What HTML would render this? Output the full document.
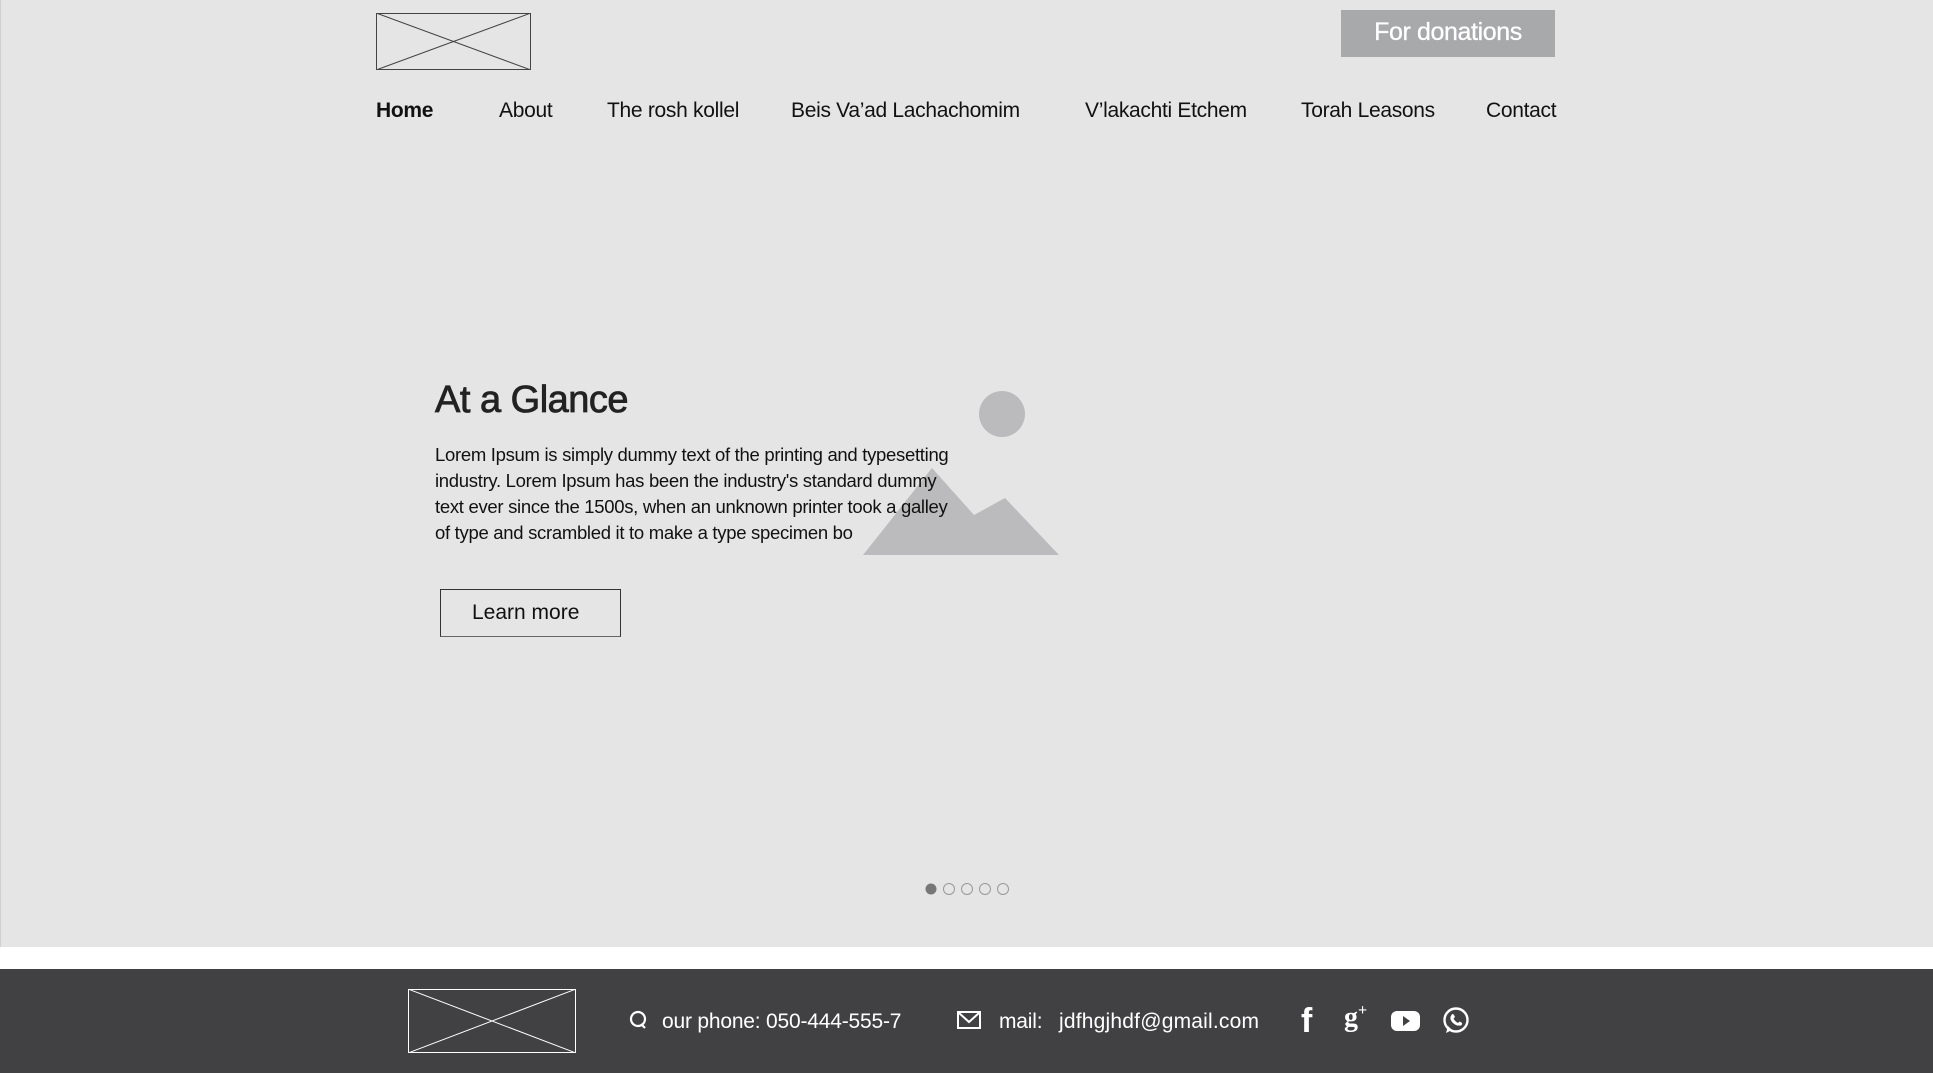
<!DOCTYPE html>
<html><head><meta charset="utf-8"><style>
*{margin:0;padding:0;box-sizing:border-box}
body{width:1933px;height:1073px;overflow:hidden;background:#fff;font-family:"Liberation Sans",Arial,sans-serif;position:relative}
.a{position:absolute;white-space:nowrap}
#hero{position:absolute;left:0;top:0;width:1933px;height:947px;background:#e5e5e5;border-left:1px solid #cfcfcf}
#foot{position:absolute;left:0;top:969px;width:1933px;height:104px;background:#414143}
.nav{top:99px;font-size:21px;color:#111;letter-spacing:-0.3px}
.ft{color:#fff;font-size:21px;top:1010px;letter-spacing:-0.2px}
</style></head><body>
<div id="hero"></div>
<svg class="a" style="left:376px;top:13px" width="155" height="57"><rect x="0.5" y="0.5" width="154" height="56" fill="none" stroke="#444"/><line x1="0" y1="0" x2="155" y2="57" stroke="#444"/><line x1="155" y1="0" x2="0" y2="57" stroke="#444"/></svg>
<div class="a" style="left:1341px;top:10px;width:214px;height:47px;background:#a8a9ab;color:#fff;font-size:25px;line-height:45px;text-align:center;letter-spacing:-0.4px;-webkit-text-stroke:0.3px #fff">For donations</div>
<div class="a nav" style="left:376px;font-weight:bold">Home</div>
<div class="a nav" style="left:499px">About</div>
<div class="a nav" style="left:607px">The rosh kollel</div>
<div class="a nav" style="left:791px">Beis Va’ad Lachachomim</div>
<div class="a nav" style="left:1085px">V’lakachti Etchem</div>
<div class="a nav" style="left:1301px">Torah Leasons</div>
<div class="a nav" style="left:1486px">Contact</div>
<svg class="a" style="left:0;top:0" width="1933" height="947"><circle cx="1002" cy="414" r="23" fill="#bbbbbd"/><polygon points="863,555 932,468 974,515 1005,498 1059,555" fill="#bbbbbd"/></svg>
<div class="a" style="left:435px;top:379px;font-size:38px;color:#222;letter-spacing:-0.5px;-webkit-text-stroke:0.8px #222">At a Glance</div>
<div class="a" style="left:435px;top:442px;font-size:18.5px;line-height:26px;color:#111;white-space:normal;width:525px;letter-spacing:-0.3px">Lorem Ipsum is simply dummy text of the printing and typesetting industry. Lorem Ipsum has been the industry's standard dummy text ever since the 1500s, when an unknown printer took a galley of type and scrambled it to make a type specimen bo</div>
<div class="a" style="left:440px;top:589px;width:181px;height:48px;border:1px solid #333;border-bottom-color:#666;font-size:21px;line-height:46px;padding-left:31px;color:#111">Learn more</div>
<svg class="a" style="left:920px;top:880px" width="100" height="20"><circle cx="11" cy="9" r="5.5" fill="#777"/><g fill="none" stroke="#999"><circle cx="29" cy="9" r="5.5"/><circle cx="47" cy="9" r="5.5"/><circle cx="65" cy="9" r="5.5"/><circle cx="83" cy="9" r="5.5"/></g></svg>
<div id="foot"></div>
<svg class="a" style="left:408px;top:989px" width="168" height="64"><rect x="0.5" y="0.5" width="167" height="63" fill="none" stroke="#fff"/><line x1="0" y1="0" x2="168" y2="64" stroke="#fff"/><line x1="168" y1="0" x2="0" y2="64" stroke="#fff"/></svg>
<svg class="a" style="left:628px;top:1010px" width="20" height="20"><circle cx="10" cy="9" r="7" fill="none" stroke="#fff" stroke-width="2.2"/><path d="M13 14 L17 18" stroke="#fff" stroke-width="2.2"/></svg>
<div class="a ft" style="left:662px">our phone: 050-444-555-7</div>
<svg class="a" style="left:957px;top:1010px" width="24" height="20"><rect x="1" y="2" width="22" height="16" fill="none" stroke="#fff" stroke-width="2"/><path d="M2 3 L12 12 L22 3" fill="none" stroke="#fff" stroke-width="2"/></svg>
<div class="a ft" style="left:999px">mail:</div>
<div class="a ft" style="left:1059px;letter-spacing:0.2px">jdfhgjhdf@gmail.com</div>
<div class="a" style="left:1301px;top:1002px;color:#fff;font-size:34px;font-weight:bold">f</div>
<div class="a" style="left:1344px;top:1002px;color:#fff;font-size:28px;font-family:'Liberation Serif',serif;font-weight:bold">g<span style="font-size:16px;vertical-align:top">+</span></div>
<svg class="a" style="left:1391px;top:1010px" width="30" height="22"><rect x="0" y="1" width="29" height="20" rx="6" fill="#fff"/><polygon points="12,6 19,11 12,16" fill="#414143"/></svg>
<svg class="a" style="left:1441px;top:1006px" width="30" height="30"><circle cx="15" cy="14" r="11.5" fill="none" stroke="#fff" stroke-width="2.4"/><path d="M5 27 L7 20 L11 24 Z" fill="#fff"/><path d="M10.5 9 q1-2 2.5 0 l1 2 -1.5 1.5 q1.5 3 4.5 4.5 l1.5-1.5 2 1 q1.5 1.5 -0.5 3 q-5 1 -9-3.5 q-3-3.5-0.5-7z" fill="#fff"/></svg>
</body></html>
